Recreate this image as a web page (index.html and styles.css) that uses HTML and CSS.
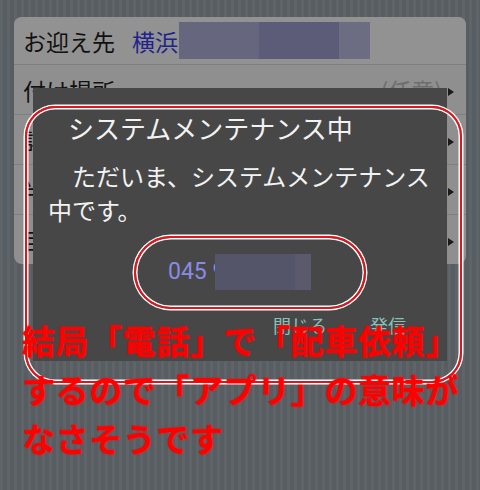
FILE: index.html
```html
<!DOCTYPE html>
<html lang="ja">
<head>
<meta charset="utf-8">
<link rel="stylesheet" href="styles.css">
</head>
<body>
<div class="screen">
  <div class="card">
    <div class="row row-first">
      <span class="label">お迎え先</span>
      <span class="place">横浜</span>
      <span class="blur-wide"></span>
    </div>
    <div class="row">
      <span class="label">付け場所</span>
      <span class="opt">(任意)</span>
      <span class="chev"></span>
    </div>
    <div class="row">
      <span class="label">詳細</span>
      <span class="chev"></span>
    </div>
    <div class="row">
      <span class="label">半日</span>
      <span class="chev"></span>
    </div>
    <div class="row row-last">
      <span class="label">目的地</span>
      <span class="chev"></span>
    </div>
  </div>

  <div class="dialog">
    <div class="dlg-title">システムメンテナンス中</div>
    <div class="dlg-body">ただいま、システムメンテナンス<br>中です。</div>
    <div class="dlg-phone"><span class="num">045 9</span><span class="blur-num"></span></div>
    <div class="dlg-actions">
      <span class="btn">閉じる</span>
      <span class="btn">発信</span>
    </div>
  </div>

  <div class="ring ring-dialog"></div>
  <div class="ring ring-phone"></div>

  <div class="note">結局「電話」で「配車依頼」<br>するので「アプリ」の意味が<br>なさそうです</div>
</div>
</body>
</html>
```
FILE: styles.css
```css
html, body {
  margin: 0;
  padding: 0;
}
body {
  width: 480px;
  height: 490px;
  overflow: hidden;
  font-family: "Noto Sans CJK JP", "Noto Sans", sans-serif;
}
.screen {
  position: relative;
  width: 480px;
  height: 490px;
  overflow: hidden;
  background: repeating-linear-gradient(90deg, #5f6469 0 3px, #585d62 3px 7px);
  padding-top: 17px;
  box-sizing: border-box;
}
.card {
  margin: 0 14px;
  background: #8f8f8f;
  border-radius: 8px;
  overflow: hidden;
}
.row {
  height: 50px;
  display: flex;
  align-items: center;
  padding: 0 12px 0 9px;
  border-top: 1px solid #7f7f7f;
  font-size: 23px;
  color: #111;
  box-sizing: border-box;
}
.row-first {
  height: 47px;
  border-top: none;
  background: #929292;
}
.row-last {
  height: 50px;
}
.label {
  line-height: 30px;
  white-space: nowrap;
}
.place {
  margin-left: 17px;
  color: #22228c;
  line-height: 30px;
}
.blur-wide {
  display: inline-block;
  width: 191px;
  height: 37px;
  margin-left: 1px;
  background: linear-gradient(90deg, #66667f 0 80px, #5c5c79 80px 160px, #6c6c82 160px);
}
.opt {
  margin-left: auto;
  color: #6e6e6e;
  font-size: 23px;
  margin-right: 6px;
}
.chev {
  margin-left: auto;
  width: 0;
  height: 0;
  border-top: 4px solid transparent;
  border-bottom: 4px solid transparent;
  border-left: 6px solid #1a1a1a;
  margin-top: 4px;
}
.opt + .chev {
  margin-left: 0;
}

.dialog {
  position: absolute;
  left: 33px;
  top: 88px;
  width: 414px;
  height: 273px;
  background: #474747;
  color: #f2f2f2;
  box-sizing: border-box;
  padding: 24px 0 0 15px;
}
.dlg-title {
  font-size: 26px;
  line-height: 32px;
  padding-left: 20px;
  white-space: nowrap;
}
.dlg-body {
  margin-top: 15px;
  font-size: 24px;
  line-height: 34px;
  text-indent: 24px;
  white-space: nowrap;
}
.dlg-phone {
  margin-top: 27px;
  padding-left: 120px;
  height: 36px;
  display: flex;
  align-items: center;
}
.num {
  font-family: Roboto, "Noto Sans", sans-serif;
  font-size: 23px;
  color: #8a8ae4;
  line-height: 36px;
}
.blur-num {
  display: inline-block;
  width: 96px;
  height: 36px;
  margin-left: -10px;
  background: linear-gradient(90deg, #555569 0 80px, #5a5a6c 80px);
}
.dlg-actions {
  margin-top: 23px;
  display: flex;
  justify-content: flex-end;
  gap: 43px;
  padding-right: 41px;
}
.btn {
  font-size: 18px;
  line-height: 24px;
  color: #86c2b9;
}

.ring {
  position: absolute;
  border: 2px solid #e3141c;
  box-shadow: 0 0 0 1.5px #fff, inset 0 0 0 1.5px #fff;
  box-sizing: border-box;
}
.ring-dialog {
  left: 25px;
  top: 106px;
  width: 437px;
  height: 277px;
  border-radius: 30px;
}
.ring-phone {
  left: 134px;
  top: 236px;
  width: 232px;
  height: 73px;
  border-radius: 37px;
}

.note {
  position: absolute;
  left: 22px;
  top: 316px;
  font-size: 33px;
  line-height: 49px;
  letter-spacing: 0.6px;
  font-weight: 700;
  color: #ff0000;
  text-shadow: 0 0 2px rgba(255, 0, 0, 0.85);
  white-space: nowrap;
}
```
